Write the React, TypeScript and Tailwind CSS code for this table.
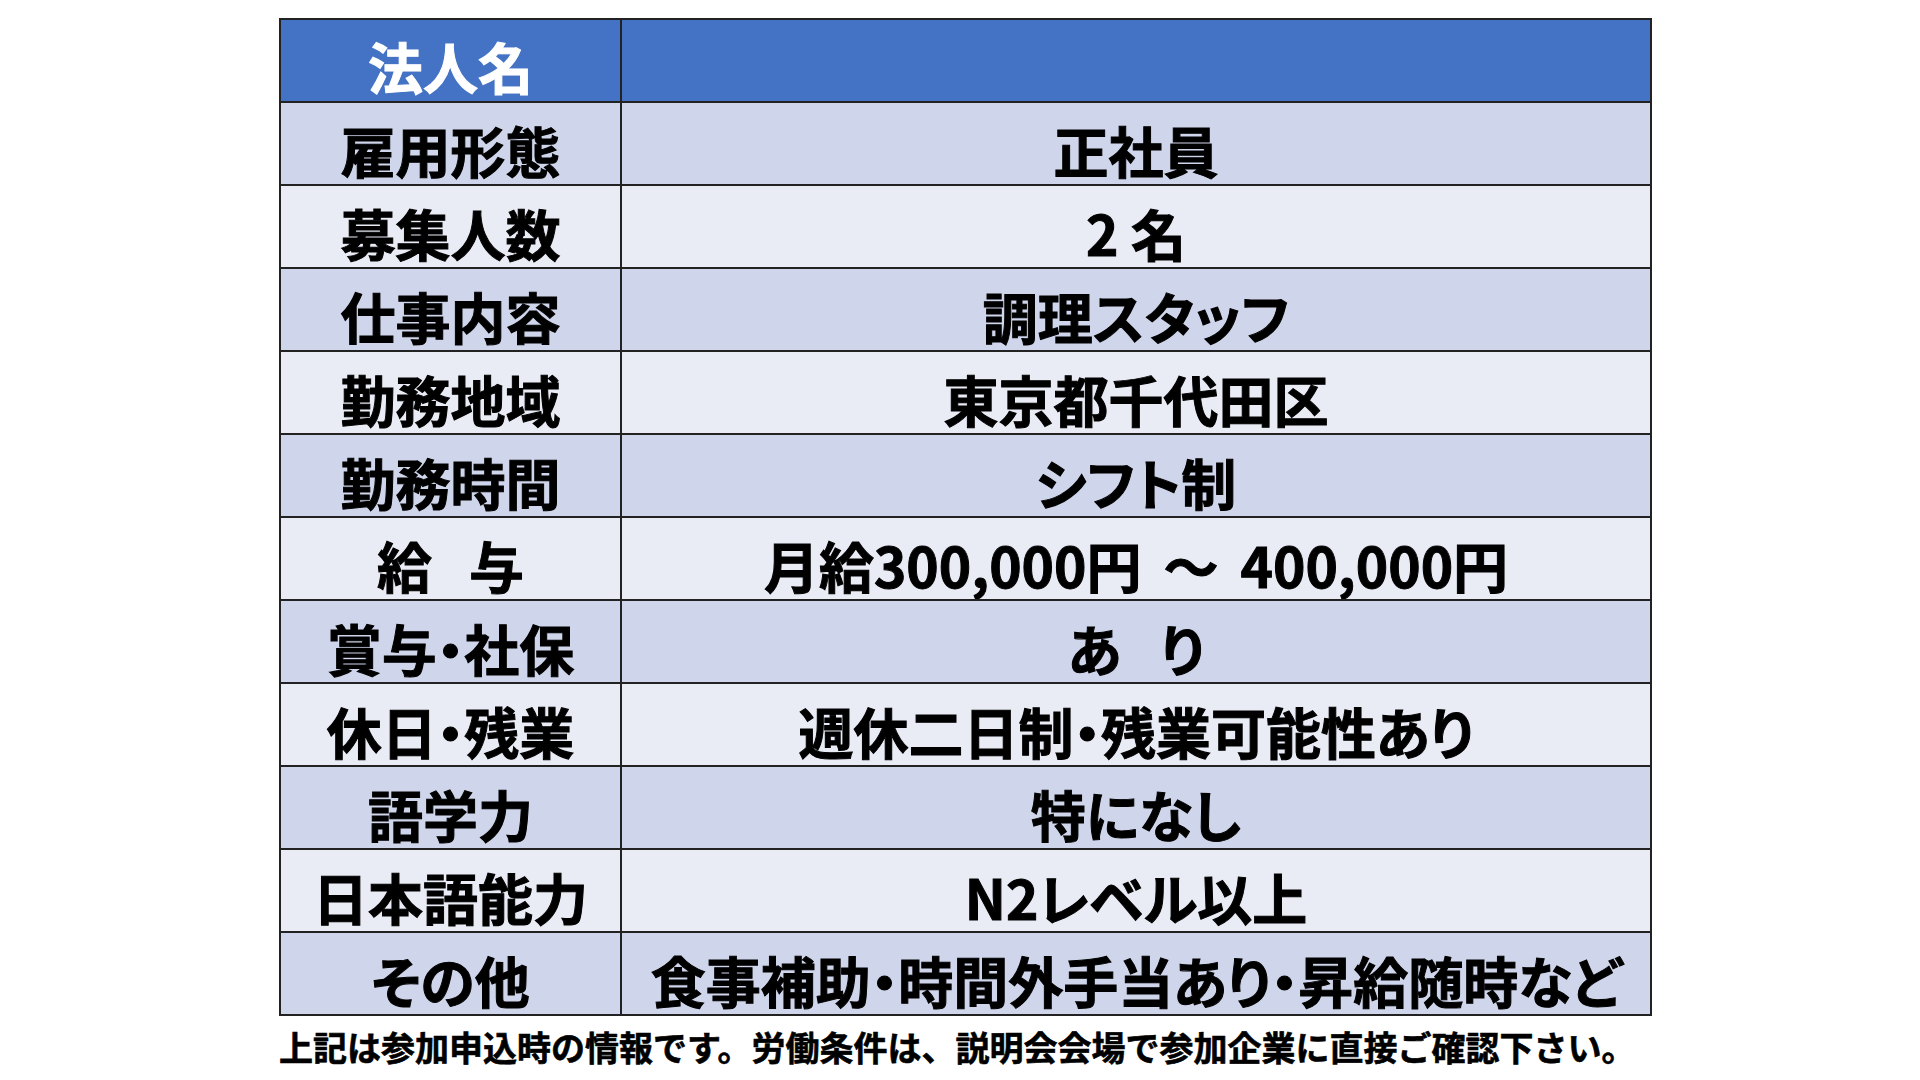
const rows: { label: React.ReactNode; value: React.ReactNode }[] = [
  { label: "雇用形態", value: "正社員" },
  { label: "募集人数", value: "2 名" },
  { label: "仕事内容", value: "調理スタッフ" },
  { label: "勤務地域", value: "東京都千代田区" },
  { label: "勤務時間", value: "シフト制" },
  {
    label: (
      <>
        給<span className="-mx-[9px]">　</span>与
      </>
    ),
    value: (
      <>
        月給300,000円<span className="px-[22px] [font-feature-settings:normal]">～</span>400,000円
      </>
    ),
  },
  {
    label: "賞与・社保",
    value: (
      <>
        あ<span className="-mx-[8px]">　</span>り
      </>
    ),
  },
  { label: "休日・残業", value: "週休二日制・残業可能性あり" },
  { label: "語学力", value: "特になし" },
  { label: "日本語能力", value: "N2レベル以上" },
  { label: "その他", value: "食事補助・時間外手当あり・昇給随時など" },
];

export default function App() {
  return (
    <main className="min-h-[1080px] w-[1920px] bg-white pl-[279px] pt-[18px] font-['Noto_Sans_CJK_JP','Noto_Sans',sans-serif] font-bold text-black [font-feature-settings:'palt'] [-webkit-text-stroke:1px_currentColor]">
      <div className="flex w-[1373px] flex-col border-2 border-[#222]">
        <div className="flex h-[81px] bg-[#4472c4]">
          <div className="flex w-[341px] items-center justify-center border-r-2 border-[#222] pt-[10px] text-[55px] leading-none text-white">
            法人名
          </div>
          <div className="flex-1" />
        </div>
        {rows.map((row, i) => (
          <div
            key={i}
            className={`flex h-[83px] border-t-2 border-[#222] ${i % 2 === 0 ? "bg-[#cfd5ea]" : "bg-[#e9ebf5]"}`}
          >
            <div className="flex w-[341px] items-center justify-center border-r-2 border-[#222] pt-[12px] text-[55px] leading-none whitespace-nowrap">
              {row.label}
            </div>
            <div className="flex flex-1 items-center justify-center pt-[12px] text-[55px] leading-none whitespace-nowrap">
              {row.value}
            </div>
          </div>
        ))}
      </div>
      <p className="mt-[14px] text-[34px] leading-none whitespace-nowrap [font-feature-settings:normal] [-webkit-text-stroke:0.6px_currentColor]">
        上記は参加申込時の情報です。労働条件は、説明会会場で参加企業に直接ご確認下さい。
      </p>
    </main>
  );
}
